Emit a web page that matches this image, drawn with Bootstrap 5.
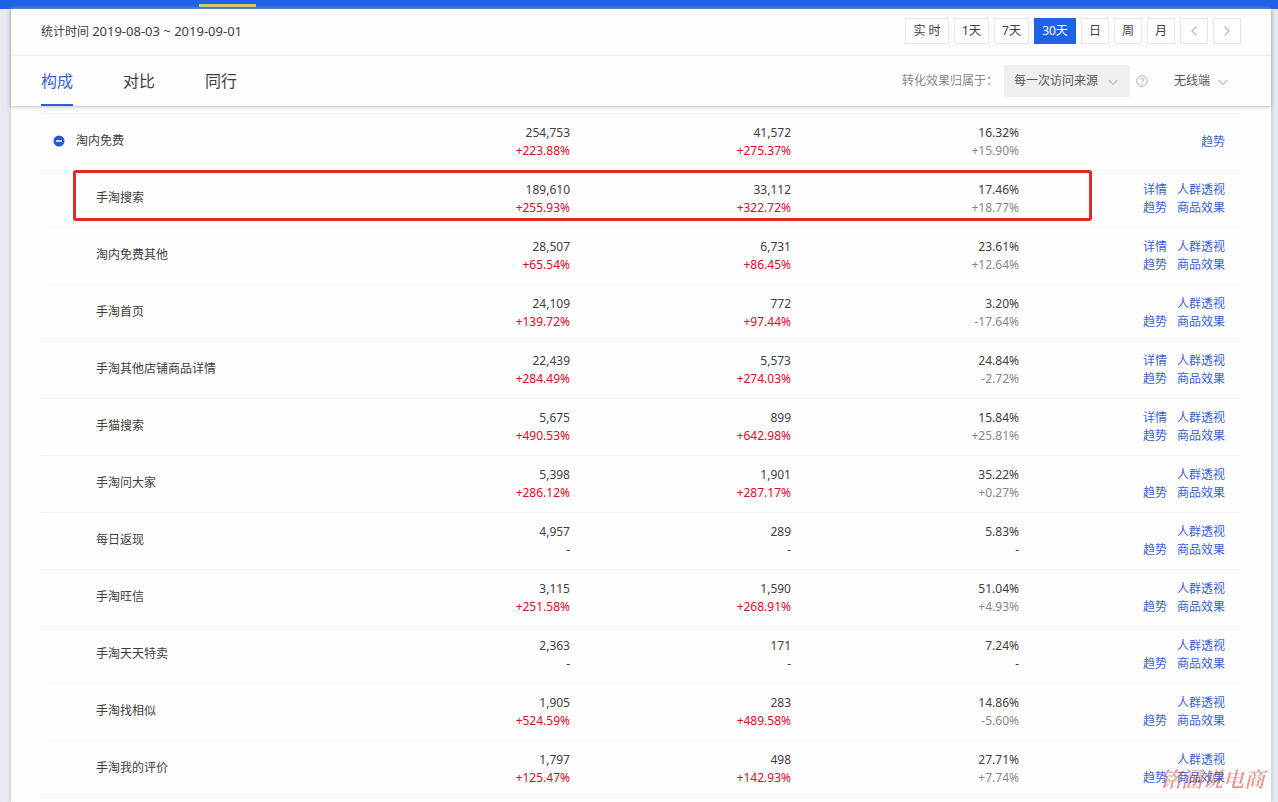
<!DOCTYPE html>
<html lang="zh-CN">
<head>
<meta charset="utf-8">
<meta name="viewport" content="width=device-width, initial-scale=1">
<title>流量来源构成</title>
<link href="https://cdn.jsdelivr.net/npm/bootstrap@5.3.0/dist/css/bootstrap.min.css" rel="stylesheet">
<style>
body{font-family:"Noto Sans","Noto Sans CJK SC",sans-serif;font-size:12px;line-height:18px;color:#404040;background:#e7eaf0;overflow-x:hidden}
a{text-decoration:none;color:#3a62d6}
.topbar{height:9px;background:#2062e6;padding:4px 0 0 199px}
.topbar span{display:block;width:57px;height:3px;background:#dccb62}
.panel{margin:0 7px 0 11px;min-height:calc(100vh - 9px);background:#fefefe;box-shadow:0 0 4px #b9bdc8}
.head{box-shadow:0 1px 4px rgba(0,0,0,.25);position:relative;background:#fefefe}
.dates{height:47px;padding:0 30px 2px;border-bottom:1px solid #ebebeb}
.period{font-size:13px}
.dates .btns{gap:5px}
.dates button{height:26px;min-width:28px;padding:0;border:1px solid #e2e5e9;background:#fff;color:#404040}
.dates .w35{width:35px}.dates .w44{width:44px}
.dates button.on{width:42px;background:#2062e6;border-color:#2062e6;color:#fff}
.tools{height:50px;padding:0 31px 0 30px}
.tabs{gap:50px;font-size:16px;line-height:24px}
.tabs a{color:#404040;height:50px;padding-top:13px;border-bottom:2px solid transparent}
.tabs a.on{color:#3a62d6;border-color:#2b5bd8}
.attr-label{color:#888;margin-right:6px}
.help{margin:0 26px 0 6px}
.drop{position:relative}
.drop select{appearance:none;border:0;background:transparent;color:#555;height:32px;padding:0 0 0 10px;width:126px}
.drop.grey select{background:#efefef;border-radius:2px}
.drop.port select{width:66px;padding:0}
.drop svg{position:absolute;right:12px;top:14px;pointer-events:none}
.listing{padding:7px 31px 0 30px}
.sources{width:100%;table-layout:fixed;border-top:1px solid #f0f0f0}
.sources .num{width:221px}.sources .rate{width:228px}
.sources tr{position:relative;border-bottom:1px solid #f2f2f2}
.sources td{padding:10px 0;text-align:right;vertical-align:middle;height:56px}
.sources td:first-child{text-align:left;padding:9px 0 11px 55px}
.sources .top td:first-child{padding-left:12px}
.sources td:last-child{padding-right:15px}
.root{gap:11px}
.up{color:#dc0a28}.dim{color:#888}
.pair{gap:10px}
.ring{position:absolute;left:32px;right:148px;top:-1px;height:51px;border:3px solid #e02b24;border-radius:3px;pointer-events:none}
.stamp{position:fixed;right:13px;bottom:8px;font:italic 600 21px/32px "Noto Serif CJK SC","Noto Sans CJK SC",serif;color:#c9302c;opacity:.5;pointer-events:none}
</style>
</head>
<body>
<div class="topbar"><span></span></div>
<main class="panel">
<header class="head">
<div class="dates d-flex align-items-center justify-content-between">
<div>统计时间 <span class="period">2019-08-03 ~ 2019-09-01</span></div>
<div class="btns d-flex">
<button class="w44">实 时</button><button class="w35">1天</button><button class="w35">7天</button><button class="on">30天</button><button>日</button><button>周</button><button>月</button>
<button class="d-flex align-items-center justify-content-center" aria-label="上一页"><svg width="8" height="12" fill="none" stroke="#bbb" stroke-width="1.3"><path d="M6.500 1.500 2 6l4.500 4.500"/></svg></button><button class="d-flex align-items-center justify-content-center" aria-label="下一页"><svg width="8" height="12" fill="none" stroke="#bbb" stroke-width="1.3"><path d="M1.500 1.500 6 6l-4.500 4.500"/></svg></button>
</div>
</div>
<div class="tools d-flex align-items-center justify-content-between">
<nav class="tabs d-flex"><a class="on" href="#">构成</a><a href="#">对比</a><a href="#">同行</a></nav>
<div class="d-flex align-items-center">
<label for="attr" class="attr-label">转化效果归属于：</label>
<div class="drop grey"><select id="attr"><option>每一次访问来源</option></select><svg width="10" height="7" fill="none" stroke="#bcbcbc" stroke-width="1.2"><path d="m.5 1 4.500 4.500L9.500 1"/></svg></div>
<svg class="help" width="12" height="12" fill="none" stroke="#a5b1cc"><circle cx="6" cy="6" r="5.300"/><path d="M4.300 4.800c0-2.300 3.500-2.300 3.500-.2C7.800 5.800 6 5.700 6 7.200M6 8.300v1.200"/></svg>
<div class="drop port"><select aria-label="终端"><option>无线端</option></select><svg width="10" height="7" fill="none" stroke="#bcbcbc" stroke-width="1.2"><path d="m.5 1 4.500 4.500L9.500 1"/></svg></div>
</div>
</div>
</header>
<section class="listing">
<table class="sources">
<colgroup><col><col class="num"><col class="num"><col class="rate"><col class="num"></colgroup>
<tbody id="rows"></tbody>
</table>
</section>
</main>
<div class="stamp">铭涵说电商</div>
<script src="https://cdn.jsdelivr.net/npm/bootstrap@5.3.0/dist/js/bootstrap.bundle.min.js"></script>
<script>
const data = [
["淘内免费","254,753","+223.88%","41,572","+275.37%","16.32%","+15.90%",0],
["手淘搜索","189,610","+255.93%","33,112","+322.72%","17.46%","+18.77%",1],
["淘内免费其他","28,507","+65.54%","6,731","+86.45%","23.61%","+12.64%",1],
["手淘首页","24,109","+139.72%","772","+97.44%","3.20%","-17.64%",0],
["手淘其他店铺商品详情","22,439","+284.49%","5,573","+274.03%","24.84%","-2.72%",1],
["手猫搜索","5,675","+490.53%","899","+642.98%","15.84%","+25.81%",1],
["手淘问大家","5,398","+286.12%","1,901","+287.17%","35.22%","+0.27%",0],
["每日返现","4,957","-","289","-","5.83%","-",0],
["手淘旺信","3,115","+251.58%","1,590","+268.91%","51.04%","+4.93%",0],
["手淘天天特卖","2,363","-","171","-","7.24%","-",0],
["手淘找相似","1,905","+524.59%","283","+489.58%","14.86%","-5.60%",0],
["手淘我的评价","1,797","+125.47%","498","+142.93%","27.71%","+7.74%",0]
];
const link = t => `<a href="#">${t}</a>`;
const delta = (v, c) => `<div class="${v === "-" ? "" : c}">${v}</div>`;
const minus = '<svg width="12" height="12"><circle cx="6" cy="6" r="5.500" fill="#2459dc"/><path d="M3 6h6" stroke="#fff" stroke-width="1.500"/></svg>';
document.getElementById("rows").innerHTML = data.map((r, i) => `<tr class="${i ? "" : "top"}">
<td>${i ? r[0] : `<div class="root d-flex align-items-center">${minus}<span>${r[0]}</span></div>`}${i === 1 ? '<div class="ring"></div>' : ""}</td>
<td>${r[1]}${delta(r[2], "up")}</td><td>${r[3]}${delta(r[4], "up")}</td><td>${r[5]}${delta(r[6], "dim")}</td>
<td>${i ? `<div class="pair d-flex justify-content-end">${r[7] ? link("详情") : ""}${link("人群透视")}</div><div class="pair d-flex justify-content-end">${link("趋势")}${link("商品效果")}</div>` : link("趋势")}</td></tr>`).join("");
</script>
</body>
</html>
